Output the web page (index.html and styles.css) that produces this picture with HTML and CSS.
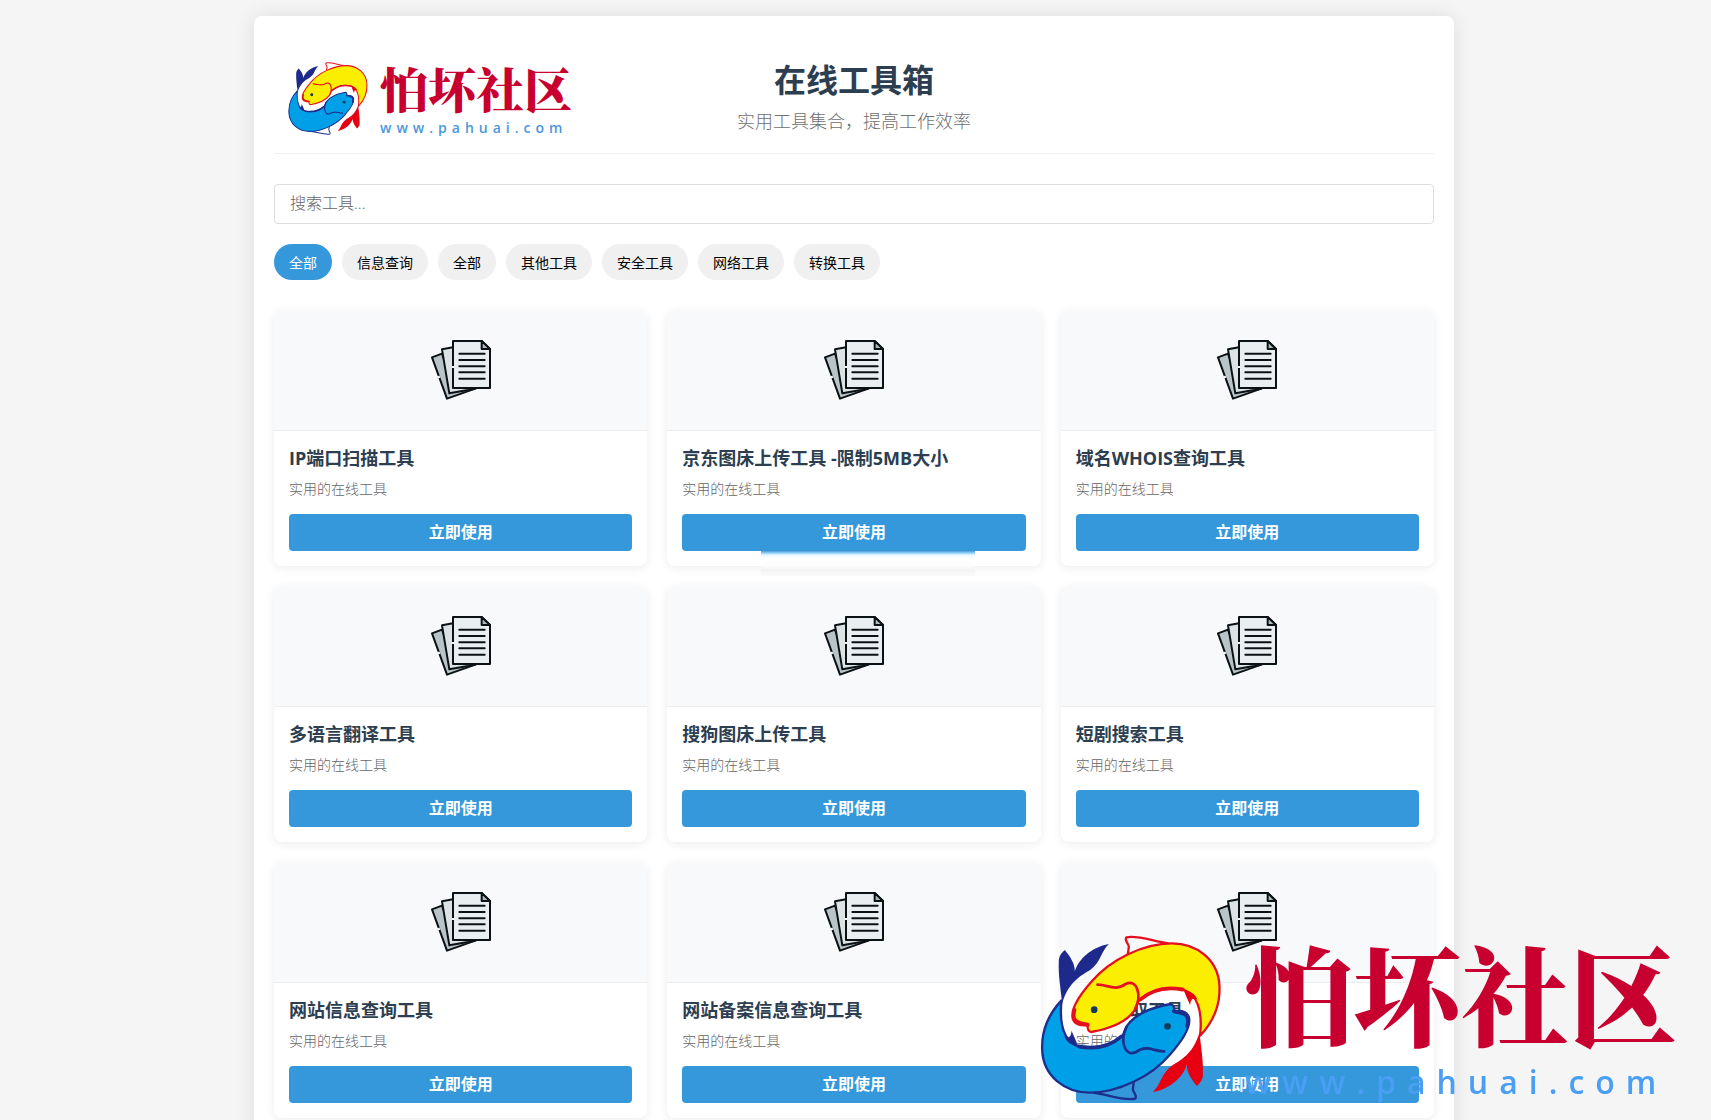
FILE: index.html
```html
<!DOCTYPE html>
<html lang="zh-CN">
<head>
    <meta charset="UTF-8">
    <title>在线工具箱</title>
    <meta name="viewport" content="width=device-width, initial-scale=1.0">
    <link rel="stylesheet" href="styles.css">
</head>
<body>
    <!-- Shared icons -->
    <svg class="sprite" aria-hidden="true">
        <symbol id="fish" viewBox="60 70 545 510">
            <path fill="none" stroke-width="7" d="M322,142 L326,112 C326,102 311,92 319,83 C350,75 400,95 445,101"/>
            <path stroke-width="7" stroke-linejoin="round" d="M540,378 C585,330 600,280 598,230 C595,150 530,101 455,101 C370,101 270,150 215,215 C175,260 150,300 158,328 C165,345 180,347 203,347 C200,355 205,365 212,367 C270,357 320,335 343,302 C352,288 352,278 357,272 C390,242 440,230 485,238 C530,252 548,300 540,378Z"/>
            <path fill="none" stroke-width="8" stroke-linecap="round" d="M232,225 C262,224 285,247 318,222 C350,208 366,255 345,298"/>
            <path fill="none" stroke-width="11" stroke-linecap="round" d="M163,300 C155,330 165,340 203,345 M360,270 C395,240 440,230 488,240"/>
            <path class="fish-solid" d="M490,240 L499,262 L510,287 C511,266 520,264 532,270 C525,252 510,243 490,240Z"/>
            <path class="fish-solid" d="M538,368 C543,420 550,450 548,500 C545,515 538,522 530,529 C515,510 500,490 500,465 C490,500 450,538 398,547 C425,520 420,495 455,468 C490,448 522,425 538,368Z"/>
            <circle class="fish-eye" cx="222" cy="300" r="10"/>
        </symbol>
        <symbol id="fish-logo" viewBox="60 70 545 510">
            <use class="fish-yellow" href="#fish" x="60" y="70" width="545" height="510"/>
            <use class="fish-blue" href="#fish" x="60" y="70" width="545" height="510" transform="rotate(180 332 325)"/>
        </symbol>
        <symbol id="papers" viewBox="0 0 180 180">
            <g stroke="#0b1215" stroke-width="6" stroke-linejoin="round" stroke-linecap="round">
                <path fill="#b9c4c8" d="M33,41 L3,52 L48,176 L135,145 L66,130Z"/>
                <path fill="#dce3e5" d="M66,22 L33,28 L55,160 L132,146 L66,140Z"/>
                <path fill="#e9eff0" d="M66,3 H152 L177,27 V144 H66Z"/>
                <path fill="#aeb9bd" d="M152,3 V27 H177Z"/>
                <path fill="none" d="M85,41 H161 M85,60 H161 M85,79 H161 M85,97 H161 M85,116 H161"/>
            </g>
            <path stroke="#f8f9fa" stroke-width="7" d="M66,78 V84 M22,108 L25,114"/>
        </symbol>
    </svg>

    <div class="container">
        <header>
            <a class="logo" href="#">
                <svg class="logo-fish"><use href="#fish-logo"/></svg>
                <span class="logo-text">
                    <span class="logo-name">怕坏社区</span>
                    <span class="logo-url">www.pahuai.com</span>
                </span>
            </a>
            <div class="heading">
                <h1>在线工具箱</h1>
                <p>实用工具集合，提高工作效率</p>
            </div>
        </header>

        <input class="search" type="text" placeholder="搜索工具..." aria-label="搜索工具">

        <div class="filters">
            <button type="button" class="filter active">全部</button>
            <button type="button" class="filter">信息查询</button>
            <button type="button" class="filter">全部</button>
            <button type="button" class="filter">其他工具</button>
            <button type="button" class="filter">安全工具</button>
            <button type="button" class="filter">网络工具</button>
            <button type="button" class="filter">转换工具</button>
        </div>

        <main class="tools">
            <div class="card">
                <div class="card-image"><svg><use href="#papers"/></svg></div>
                <div class="card-body">
                    <h2>IP端口扫描工具</h2>
                    <p>实用的在线工具</p>
                    <a class="btn" href="#">立即使用</a>
                </div>
            </div>
            <div class="card smudged">
                <div class="card-image"><svg><use href="#papers"/></svg></div>
                <div class="card-body">
                    <h2>京东图床上传工具 -限制5MB大小</h2>
                    <p>实用的在线工具</p>
                    <a class="btn" href="#">立即使用</a>
                </div>
            </div>
            <div class="card">
                <div class="card-image"><svg><use href="#papers"/></svg></div>
                <div class="card-body">
                    <h2>域名WHOIS查询工具</h2>
                    <p>实用的在线工具</p>
                    <a class="btn" href="#">立即使用</a>
                </div>
            </div>
            <div class="card">
                <div class="card-image"><svg><use href="#papers"/></svg></div>
                <div class="card-body">
                    <h2>多语言翻译工具</h2>
                    <p>实用的在线工具</p>
                    <a class="btn" href="#">立即使用</a>
                </div>
            </div>
            <div class="card">
                <div class="card-image"><svg><use href="#papers"/></svg></div>
                <div class="card-body">
                    <h2>搜狗图床上传工具</h2>
                    <p>实用的在线工具</p>
                    <a class="btn" href="#">立即使用</a>
                </div>
            </div>
            <div class="card">
                <div class="card-image"><svg><use href="#papers"/></svg></div>
                <div class="card-body">
                    <h2>短剧搜索工具</h2>
                    <p>实用的在线工具</p>
                    <a class="btn" href="#">立即使用</a>
                </div>
            </div>
            <div class="card">
                <div class="card-image"><svg><use href="#papers"/></svg></div>
                <div class="card-body">
                    <h2>网站信息查询工具</h2>
                    <p>实用的在线工具</p>
                    <a class="btn" href="#">立即使用</a>
                </div>
            </div>
            <div class="card">
                <div class="card-image"><svg><use href="#papers"/></svg></div>
                <div class="card-body">
                    <h2>网站备案信息查询工具</h2>
                    <p>实用的在线工具</p>
                    <a class="btn" href="#">立即使用</a>
                </div>
            </div>
            <div class="card">
                <div class="card-image"><svg><use href="#papers"/></svg></div>
                <div class="card-body">
                    <h2>网站获取工具</h2>
                    <p>实用的在线工具</p>
                    <a class="btn" href="#">立即使用</a>
                </div>
            </div>
        </main>
    </div>

    <!-- Watermark in the corner -->
    <div class="watermark">
        <svg class="watermark-fish"><use href="#fish-logo"/></svg>
        <div class="watermark-text">
            <span class="watermark-name">怕坏社区</span>
            <span class="watermark-url">www.pahuai.com</span>
        </div>
    </div>
</body>
</html>
```
FILE: styles.css
```css
/* General Styles */
* {
    box-sizing: border-box;
    margin: 0;
    padding: 0;
}

body {
    font-family: "Open Sans", "Noto Sans CJK SC", sans-serif;
    background-color: #f5f5f5;
    color: #333;
    padding: 16px 19px 20px 16px;
}

.sprite {
    position: absolute;
    width: 0;
    height: 0;
}

.container {
    max-width: 1200px;
    margin: 0 auto;
    padding: 20px;
    background-color: #fff;
    border-radius: 8px;
    box-shadow: 0 0 20px rgba(0, 0, 0, 0.1);
}

/* Header Styles */
header {
    display: grid;
    grid-template-columns: 1fr auto 1fr;
    padding: 20px 0 12px;
    margin-bottom: 30px;
    border-bottom: 1px solid #eee;
}

.heading {
    text-align: center;
}

.heading h1 {
    font-size: 32px;
    line-height: 47px;
    color: #2c3e50;
    margin-bottom: 4px;
}

.heading p {
    font-size: 18px;
    line-height: 28px;
    font-weight: 300;
    color: #6f7070;
}

/* Logo Styles */
.logo {
    display: flex;
    gap: 12px;
    padding: 5px 0 0 14px;
    text-decoration: none;
}

.logo-fish {
    width: 80px;
    height: 75px;
}

.logo-text,
.watermark-text {
    display: flex;
    flex-direction: column;
    white-space: nowrap;
}

.logo-name,
.watermark-name {
    font-family: "Noto Serif CJK SC", "Noto Sans CJK SC", serif;
    font-weight: 900;
    color: #c8002f;
}

.logo-name {
    font-size: 48px;
    line-height: 53px;
}

.logo-url,
.watermark-url {
    font-family: "Open Sans", sans-serif;
    font-weight: 600;
    color: #4a98dc;
}

.logo-url {
    font-size: 14px;
    line-height: 27px;
    letter-spacing: 5px;
}

.fish-yellow {
    fill: #fcee00;
    stroke: #e60f1e;
    color: #e60012;
}

.fish-blue {
    fill: #00a0e9;
    stroke: #1d2f8c;
    color: #1d2a8c;
}

.fish-solid {
    fill: currentColor;
    stroke: none;
}

.fish-eye {
    fill: #123a5c;
    stroke: none;
}

/* Search and Filters */
.search {
    display: block;
    width: 100%;
    height: 40px;
    padding: 0 15px 2px;
    margin-bottom: 20px;
    border: 1px solid #ddd;
    border-radius: 4px;
    font-family: inherit;
    font-size: 16px;
    font-weight: 300;
}

.search::placeholder {
    color: #666;
}

.filters {
    display: flex;
    flex-wrap: wrap;
    gap: 10px;
    margin-bottom: 30px;
}

.filter {
    height: 36px;
    padding: 0 15px;
    border: none;
    border-radius: 18px;
    background-color: #f0f0f0;
    color: #000;
    font-family: inherit;
    font-size: 14px;
    cursor: pointer;
}

.filter.active {
    background-color: #3498db;
    color: #fff;
}

/* Tool Cards */
.tools {
    display: grid;
    grid-template-columns: repeat(3, 1fr);
    gap: 20px;
}

.card {
    position: relative;
    background-color: #fff;
    border-radius: 8px;
    box-shadow: 0 2px 10px rgba(0, 0, 0, 0.08);
}

.card-image {
    display: flex;
    align-items: center;
    justify-content: center;
    height: 121px;
    background-color: #f8f9fa;
    border-bottom: 1px solid #eee;
    border-radius: 8px 8px 0 0;
}

.card-image svg {
    width: 60px;
    height: 60px;
}

.card-body {
    padding: 15px;
}

.card-body h2 {
    font-size: 18px;
    line-height: 25px;
    color: #2c3e50;
    margin-bottom: 8px;
}

.card-body p {
    font-size: 14px;
    line-height: 20px;
    font-weight: 300;
    color: #666;
    margin-bottom: 15px;
}

.btn {
    display: block;
    border-radius: 4px;
    background-color: #3498db;
    color: #fff;
    font-size: 16px;
    font-weight: 600;
    line-height: 37px;
    text-align: center;
    text-decoration: none;
}

/* Pale strip across the lower edge of the card */
.smudged::after {
    content: "";
    position: absolute;
    top: 240px;
    left: 25%;
    width: 214px;
    height: 26px;
    background: linear-gradient(#2a86cf, #8fd0fb 3px, #e8f7ff 5px, #fff 8px, #fcfcfc 16px, #f3f3f3 20px, #fbfbfb);
}

/* Watermark */
.watermark {
    position: fixed;
    right: 34px;
    bottom: 7px;
    display: flex;
    gap: 23px;
    pointer-events: none;
}

.watermark-fish {
    width: 182px;
    height: 170px;
}

.watermark-name {
    font-size: 108px;
    line-height: 118px;
}

.watermark-url {
    font-size: 32px;
    line-height: 62px;
    letter-spacing: 11px;
    color: #4a9ff5;
}

/* Responsive Design */
@media (max-width: 900px) {
    .tools {
        grid-template-columns: repeat(2, 1fr);
    }

    header {
        grid-template-columns: 1fr;
    }
}

@media (max-width: 600px) {
    .tools {
        grid-template-columns: 1fr;
    }
}
```
